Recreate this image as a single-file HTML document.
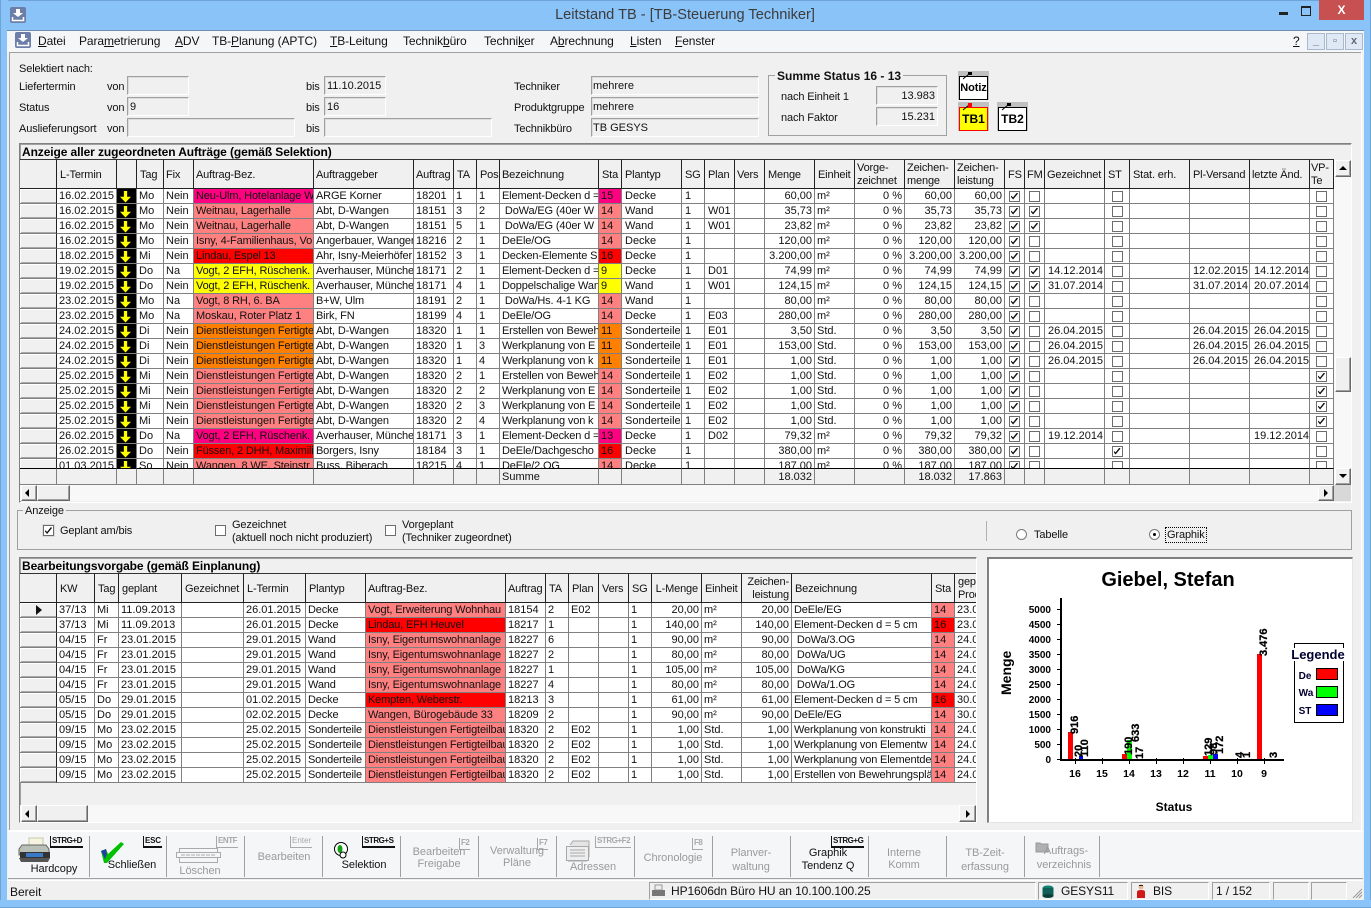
<!DOCTYPE html>
<html lang="de"><head><meta charset="utf-8"><title>Leitstand TB</title>
<style>
html,body{margin:0;padding:0;background:#f0f0f0}
body{position:relative;width:1371px;height:908px;overflow:hidden;font:11px/14px "Liberation Sans",sans-serif;color:#111}
div,span,svg,table,a{box-sizing:border-box}
.b{position:absolute}
.l{position:absolute;white-space:nowrap;line-height:14px;letter-spacing:-.13px}
.g{color:#9a9a9a}
.cc{transform:translateX(-50%);text-align:center;letter-spacing:-.05px}
.f{position:absolute;background:#f0f0f0;border:1px solid;border-color:#a0a0a0 #fff #fff #a0a0a0;box-shadow:inset 1px 1px 0 #dcdcdc;padding:0 2px;line-height:19px;white-space:nowrap;height:19px}
.m1{position:absolute;top:34px;font-size:12px;line-height:14px;white-space:nowrap;color:#111;letter-spacing:-.1px}
table{border-collapse:separate;border-spacing:0;table-layout:fixed;position:absolute;left:0;top:0}
td,th{box-sizing:border-box;border-right:1px solid #808080;border-bottom:1px solid #808080;height:15px;padding:0 2px;line-height:14px;overflow:hidden;white-space:nowrap;font-weight:normal;text-align:left;background:#fff;vertical-align:middle}
th{height:30px;background:#f0f0f0;border-right:1px solid #222;border-bottom:1px solid #222;border-top:1px solid #333;line-height:13px;padding:2px 2px 0;letter-spacing:-.15px}
td.h,.sum td{background:#f0f0f0}
td.h{border-right:1px solid #222;box-shadow:inset 1px 1px 0 #fff,inset 0 -1px 0 #a8a8a8}
.t1 td:nth-child(17),.t1 td:nth-child(19),.t1 td:nth-child(20),.t1 td:nth-child(21),.sum td:nth-child(17),.sum td:nth-child(20),.sum td:nth-child(21),.t2 td:nth-child(14),.t2 td:nth-child(16),.rr{text-align:right}
.t1 td:nth-child(6),.t1 td:nth-child(7),.t1 td:nth-child(11),.t2 td:nth-child(7),.t2 td:nth-child(8),.t2 td:nth-child(17){letter-spacing:-.15px}
.t1 td:nth-child(13),.t1 td:nth-child(14),.t1 td:nth-child(15),.t1 td:nth-child(24),.t1 td:nth-child(27){padding-left:3px}
.t1 td:nth-child(28){padding-left:4px}
.sum td{height:17px;border-bottom:1px solid #808080}
.sum tr td{border-top:1px solid #000}
td.w{background:#000;padding:1px 0 0 3px}
i{display:block}
i.a{width:11px;height:12px;background:#ff0;clip-path:polygon(35% 0,65% 0,65% 52%,100% 52%,50% 100%,0 52%,35% 52%)}
i.c,i.k{width:11px;height:11px;border:1px solid #6d6d6d;background:#fff;margin:0 auto;position:relative;box-sizing:border-box}
i.k::after{content:"";position:absolute;left:1px;top:1px;width:7px;height:7px;background:#111;clip-path:polygon(0 45%,30% 70%,85% 0,100% 15%,30% 100%,0 65%)}
td.m,.m{background:#ff0080}td.r{background:#f00}td.p{background:#ff8080}td.o{background:#ff8000}td.y{background:#ff0}
.bt{position:absolute;background:#f0f0f0;border:1px solid;border-color:#fff #696969 #696969 #fff;box-shadow:inset -1px -1px 0 #a0a0a0}
.tr{position:absolute;background:#f8f8f8}
.arr{position:absolute;width:0;height:0;border:4px solid transparent}
.s{position:absolute;font-weight:bold;font-size:8px;line-height:10px;height:12px;border-left:1px solid currentColor;border-bottom:2px solid currentColor;padding:0 1px 0 1px;white-space:nowrap;letter-spacing:-.45px;color:#111}
.s.g{color:#a8a8a8;border-bottom-width:1px}
.sep{position:absolute;top:836px;height:41px;width:1px;background:#a0a0a0}
.sb{position:absolute;top:882px;height:18px;border:1px solid;border-color:#a0a0a0 #fff #fff #a0a0a0;line-height:17px;padding-left:3px;white-space:nowrap;font-size:12px;letter-spacing:-.1px}
.mb{position:absolute;top:33px;width:18px;height:17px;background:#dfe9f5;border:1px solid #a9b9cc;color:#667;text-align:center;line-height:14px;font-size:11px;font-weight:bold}
.nb{position:absolute;width:31px;height:29px;background:#c0c0c0}
.nb div{position:absolute;left:1px;top:5px;width:29px;height:24px;border:1px solid #000;background:#fff;font-weight:bold;font-size:12px;text-align:center;line-height:22px;color:#000;white-space:nowrap}
.nb svg{position:absolute;left:0;top:0}
</style></head><body>

<!-- Window frame -->
<div class="b" style="left:0;top:0;width:1371px;height:31px;background:#8ac3f8;border-top:1px solid #6fa3d6"></div>
<div class="b" style="left:0;top:0;width:8px;height:908px;background:#8ac3f8;border-left:1px solid #6fa3d6"></div>
<div class="b" style="right:0;top:0;width:8px;height:908px;background:#8ac3f8;border-right:1px solid #6fa3d6"></div>
<div class="b" style="left:0;top:900px;width:1371px;height:8px;background:#8ac3f8;border-bottom:1px solid #6fa3d6"></div>
<div class="b" style="left:7px;top:30px;width:1357px;height:1px;background:#6e8fb2"></div>
<div class="b" style="left:7px;top:31px;width:1357px;height:869px;background:#f0f0f0"></div>

<!-- Title -->
<svg class="b" style="left:10px;top:7px" width="16" height="16" viewBox="0 0 16 16"><rect width="16" height="16" rx="2" fill="#6d7fa8"/><path d="M6 2h4v4h3l-5 4-5-4h3z" fill="#fff"/><path d="M2.500 10v3.500h11V10" fill="none" stroke="#fff" stroke-width="1.500"/></svg>
<div class="l cc" style="left:685px;top:7px;font-size:14.600px;line-height:17px;color:#3c3c3c;letter-spacing:0">Leitstand TB - [TB-Steuerung Techniker]</div>
<div class="b" style="left:1279px;top:12px;width:9px;height:3px;background:#222"></div>
<div class="b" style="left:1301px;top:6px;width:10px;height:10px;border:1px solid #222;border-top-width:2px"></div>
<div class="b" style="left:1319px;top:0;width:45px;height:20px;background:#c75050;color:#fff;text-align:center;font-size:12px;font-weight:bold;line-height:20px">X</div>

<!-- Menu -->
<div class="b" style="left:7px;top:31px;width:1357px;height:21px;background:#f5f6f7"></div>
<svg class="b" style="left:15px;top:32px" width="16" height="16" viewBox="0 0 16 16"><rect width="16" height="16" rx="2" fill="#6d7fa8"/><path d="M6 2h4v4h3l-5 4-5-4h3z" fill="#fff"/><path d="M2.500 10v3.500h11V10" fill="none" stroke="#fff" stroke-width="1.500"/></svg>
<div class="m1" style="left:38px"><u>D</u>atei</div>
<div class="m1" style="left:79px">Para<u>m</u>etrierung</div>
<div class="m1" style="left:175px"><u>A</u>DV</div>
<div class="m1" style="left:212px">TB-<u>P</u>lanung (APTC)</div>
<div class="m1" style="left:330px"><u>T</u>B-Leitung</div>
<div class="m1" style="left:403px">Technik<u>b</u>üro</div>
<div class="m1" style="left:484px">Techni<u>k</u>er</div>
<div class="m1" style="left:550px">A<u>b</u>rechnung</div>
<div class="m1" style="left:630px"><u>L</u>isten</div>
<div class="m1" style="left:675px"><u>F</u>enster</div>
<div class="m1" style="left:1293px"><u>?</u></div>
<div class="mb" style="left:1307px">_</div><div class="mb" style="left:1326px">▫</div><div class="mb" style="left:1345px">x</div>
<div class="b" style="left:9px;top:52px;width:1353px;height:1px;background:#a0a0a0"></div>
<div class="b" style="left:9px;top:52px;width:1px;height:778px;background:#a0a0a0"></div>
<div class="b" style="left:1361px;top:52px;width:1px;height:778px;background:#fff"></div>

<!-- Selection -->
<div class="l" style="left:19px;top:62px">Selektiert nach:</div>
<div class="l" style="left:19px;top:80px">Liefertermin</div><div class="l" style="left:107px;top:80px">von</div>
<div class="f" style="left:127px;top:76px;width:62px"></div><div class="l" style="left:306px;top:80px">bis</div><div class="f" style="left:324px;top:76px;width:62px">11.10.2015</div>
<div class="l" style="left:19px;top:101px">Status</div><div class="l" style="left:107px;top:101px">von</div>
<div class="f" style="left:127px;top:97px;width:62px">9</div><div class="l" style="left:306px;top:101px">bis</div><div class="f" style="left:324px;top:97px;width:62px">16</div>
<div class="l" style="left:19px;top:122px">Auslieferungsort</div><div class="l" style="left:107px;top:122px">von</div>
<div class="f" style="left:127px;top:118px;width:168px"></div><div class="l" style="left:306px;top:122px">bis</div><div class="f" style="left:324px;top:118px;width:168px"></div>
<div class="l" style="left:514px;top:80px">Techniker</div><div class="f" style="left:591px;top:76px;width:168px;padding-left:1px">mehrere</div>
<div class="l" style="left:514px;top:101px">Produktgruppe</div><div class="f" style="left:591px;top:97px;width:168px;padding-left:1px">mehrere</div>
<div class="l" style="left:514px;top:122px">Technikbüro</div><div class="f" style="left:591px;top:118px;width:168px;padding-left:1px">TB GESYS</div>

<div class="b" style="left:768px;top:75px;width:179px;height:61px;border:1px solid #a0a0a0"></div>
<div class="l" style="left:775px;top:69px;background:#f0f0f0;padding:0 2px;font-weight:bold;font-size:12px;letter-spacing:0">Summe Status 16 - 13</div>
<div class="l" style="left:781px;top:90px">nach Einheit 1</div><div class="f rr" style="left:876px;top:86px;width:62px">13.983</div>
<div class="l" style="left:781px;top:111px">nach Faktor</div><div class="f rr" style="left:876px;top:107px;width:62px">15.231</div>

<div class="nb" style="left:958px;top:71px"><div style="font-size:11px;letter-spacing:-.1px">Notiz</div><svg width="20" height="10"><path d="M5 8 11 3" stroke="#000"/><rect x="10" y="1" width="4" height="3" fill="#000"/></svg></div>
<div class="nb" style="left:958px;top:102px"><div style="background:#ff0;border:1px solid #f00">TB1</div><svg width="20" height="10"><path d="M5 8 11 3" stroke="#000"/><rect x="10" y="1" width="4" height="4" fill="#f00"/></svg></div>
<div class="nb" style="left:997px;top:102px"><div>TB2</div><svg width="20" height="10"><path d="M5 8 11 3" stroke="#000"/><rect x="10" y="1" width="4" height="3" fill="#000"/></svg></div>

<!-- Top grid -->
<div class="b" style="left:19px;top:143px;width:1333px;height:360px;border:1px solid;border-color:#808080 #fff #fff #808080;box-shadow:inset 1px 1px 0 #a0a0a0"></div>
<div class="l" style="left:22px;top:145px;font-weight:bold;font-size:12px;line-height:14px;color:#000;letter-spacing:-.1px">Anzeige aller zugeordneten Aufträge (gemäß Selektion)</div>
<div class="b" style="left:20px;top:159px;width:1314px;height:309px;overflow:hidden">
<table class="t1" style="width:1314px">
<colgroup><col style="width:37px"><col style="width:60px"><col style="width:20px"><col style="width:27px"><col style="width:30px"><col style="width:120px"><col style="width:100px"><col style="width:40px"><col style="width:23px"><col style="width:23px"><col style="width:99px"><col style="width:23px"><col style="width:60px"><col style="width:23px"><col style="width:30px"><col style="width:30px"><col style="width:50px"><col style="width:40px"><col style="width:50px"><col style="width:50px"><col style="width:50px"><col style="width:20px"><col style="width:20px"><col style="width:60px"><col style="width:25px"><col style="width:60px"><col style="width:60px"><col style="width:60px"><col style="width:24px"></colgroup>
<tr><th></th><th style="padding-left:3px">L-Termin</th><th></th><th style="padding-left:3px">Tag</th><th>Fix</th><th>Auftrag-Bez.</th><th>Auftraggeber</th><th>Auftrag</th><th style="padding-left:3px">TA</th><th style="padding-left:3px">Pos</th><th>Bezeichnung</th><th style="padding-left:3px">Sta</th><th style="padding-left:3px">Plantyp</th><th style="padding-left:3px">SG</th><th style="padding-left:3px">Plan</th><th>Vers</th><th style="padding-left:3px">Menge</th><th style="padding-left:3px">Einheit</th><th>Vorge-<br>zeichnet</th><th>Zeichen-<br>menge</th><th>Zeichen-<br>leistung</th><th style="padding-left:3px">FS</th><th>FM</th><th>Gezeichnet</th><th style="padding-left:3px">ST</th><th style="padding-left:3px">Stat. erh.</th><th style="padding-left:3px">Pl-Versand</th><th>letzte Änd.</th><th style="padding-left:1px">VP-<br>Te</th></tr>
<tr><td class=h></td><td>16.02.2015</td><td class=w><i class=a></i></td><td>Mo</td><td>Nein</td><td class=m>Neu-Ulm, Hotelanlage W</td><td>ARGE Korner</td><td>18201</td><td>1</td><td>1</td><td>Element-Decken d = 5</td><td class=m>15</td><td>Decke</td><td>1</td><td></td><td></td><td>60,00</td><td>m²</td><td>0 %</td><td>60,00</td><td>60,00</td><td><i class=k></i></td><td><i class=c></i></td><td></td><td><i class=c></i></td><td></td><td></td><td></td><td><i class=c></i></td></tr>
<tr><td class=h></td><td>16.02.2015</td><td class=w><i class=a></i></td><td>Mo</td><td>Nein</td><td class=p>Weitnau, Lagerhalle</td><td>Abt, D-Wangen</td><td>18151</td><td>3</td><td>2</td><td>&nbsp;DoWa/EG (40er W</td><td class=p>14</td><td>Wand</td><td>1</td><td>W01</td><td></td><td>35,73</td><td>m²</td><td>0 %</td><td>35,73</td><td>35,73</td><td><i class=k></i></td><td><i class=k></i></td><td></td><td><i class=c></i></td><td></td><td></td><td></td><td><i class=c></i></td></tr>
<tr><td class=h></td><td>16.02.2015</td><td class=w><i class=a></i></td><td>Mo</td><td>Nein</td><td class=p>Weitnau, Lagerhalle</td><td>Abt, D-Wangen</td><td>18151</td><td>5</td><td>1</td><td>&nbsp;DoWa/EG (40er W</td><td class=p>14</td><td>Wand</td><td>1</td><td>W01</td><td></td><td>23,82</td><td>m²</td><td>0 %</td><td>23,82</td><td>23,82</td><td><i class=k></i></td><td><i class=k></i></td><td></td><td><i class=c></i></td><td></td><td></td><td></td><td><i class=c></i></td></tr>
<tr><td class=h></td><td>16.02.2015</td><td class=w><i class=a></i></td><td>Mo</td><td>Nein</td><td class=p>Isny, 4-Familienhaus, Vo</td><td>Angerbauer, Wangen</td><td>18216</td><td>2</td><td>1</td><td>DeEle/OG</td><td class=p>14</td><td>Decke</td><td>1</td><td></td><td></td><td>120,00</td><td>m²</td><td>0 %</td><td>120,00</td><td>120,00</td><td><i class=k></i></td><td><i class=c></i></td><td></td><td><i class=c></i></td><td></td><td></td><td></td><td><i class=c></i></td></tr>
<tr><td class=h></td><td>18.02.2015</td><td class=w><i class=a></i></td><td>Mi</td><td>Nein</td><td class=r>Lindau, Espel 13</td><td>Ahr, Isny-Meierhöfer</td><td>18152</td><td>3</td><td>1</td><td>Decken-Elemente S</td><td class=r>16</td><td>Decke</td><td>1</td><td></td><td></td><td>3.200,00</td><td>m²</td><td>0 %</td><td>3.200,00</td><td>3.200,00</td><td><i class=k></i></td><td><i class=c></i></td><td></td><td><i class=c></i></td><td></td><td></td><td></td><td><i class=c></i></td></tr>
<tr><td class=h></td><td>19.02.2015</td><td class=w><i class=a></i></td><td>Do</td><td>Na</td><td class=y>Vogt, 2 EFH, Rüschenk.</td><td>Averhauser, München</td><td>18171</td><td>2</td><td>1</td><td>Element-Decken d = 5</td><td class=y>9</td><td>Decke</td><td>1</td><td>D01</td><td></td><td>74,99</td><td>m²</td><td>0 %</td><td>74,99</td><td>74,99</td><td><i class=k></i></td><td><i class=k></i></td><td>14.12.2014</td><td><i class=c></i></td><td></td><td>12.02.2015</td><td>14.12.2014</td><td><i class=c></i></td></tr>
<tr><td class=h></td><td>19.02.2015</td><td class=w><i class=a></i></td><td>Do</td><td>Nein</td><td class=y>Vogt, 2 EFH, Rüschenk.</td><td>Averhauser, München</td><td>18171</td><td>4</td><td>1</td><td>Doppelschalige Wand</td><td class=y>9</td><td>Wand</td><td>1</td><td>W01</td><td></td><td>124,15</td><td>m²</td><td>0 %</td><td>124,15</td><td>124,15</td><td><i class=k></i></td><td><i class=k></i></td><td>31.07.2014</td><td><i class=c></i></td><td></td><td>31.07.2014</td><td>20.07.2014</td><td><i class=c></i></td></tr>
<tr><td class=h></td><td>23.02.2015</td><td class=w><i class=a></i></td><td>Mo</td><td>Na</td><td class=p>Vogt, 8 RH, 6. BA</td><td>B+W, Ulm</td><td>18191</td><td>2</td><td>1</td><td>&nbsp;DoWa/Hs. 4-1 KG</td><td class=p>14</td><td>Wand</td><td>1</td><td></td><td></td><td>80,00</td><td>m²</td><td>0 %</td><td>80,00</td><td>80,00</td><td><i class=k></i></td><td><i class=c></i></td><td></td><td><i class=c></i></td><td></td><td></td><td></td><td><i class=c></i></td></tr>
<tr><td class=h></td><td>23.02.2015</td><td class=w><i class=a></i></td><td>Mo</td><td>Na</td><td class=p>Moskau, Roter Platz 1</td><td>Birk, FN</td><td>18199</td><td>4</td><td>1</td><td>DeEle/OG</td><td class=p>14</td><td>Decke</td><td>1</td><td>E03</td><td></td><td>280,00</td><td>m²</td><td>0 %</td><td>280,00</td><td>280,00</td><td><i class=k></i></td><td><i class=c></i></td><td></td><td><i class=c></i></td><td></td><td></td><td></td><td><i class=c></i></td></tr>
<tr><td class=h></td><td>24.02.2015</td><td class=w><i class=a></i></td><td>Di</td><td>Nein</td><td class=o>Dienstleistungen Fertigte</td><td>Abt, D-Wangen</td><td>18320</td><td>1</td><td>1</td><td>Erstellen von Beweh</td><td class=o>11</td><td>Sonderteile</td><td>1</td><td>E01</td><td></td><td>3,50</td><td>Std.</td><td>0 %</td><td>3,50</td><td>3,50</td><td><i class=k></i></td><td><i class=c></i></td><td>26.04.2015</td><td><i class=c></i></td><td></td><td>26.04.2015</td><td>26.04.2015</td><td><i class=c></i></td></tr>
<tr><td class=h></td><td>24.02.2015</td><td class=w><i class=a></i></td><td>Di</td><td>Nein</td><td class=o>Dienstleistungen Fertigte</td><td>Abt, D-Wangen</td><td>18320</td><td>1</td><td>3</td><td>Werkplanung von E</td><td class=o>11</td><td>Sonderteile</td><td>1</td><td>E01</td><td></td><td>153,00</td><td>Std.</td><td>0 %</td><td>153,00</td><td>153,00</td><td><i class=k></i></td><td><i class=c></i></td><td>26.04.2015</td><td><i class=c></i></td><td></td><td>26.04.2015</td><td>26.04.2015</td><td><i class=c></i></td></tr>
<tr><td class=h></td><td>24.02.2015</td><td class=w><i class=a></i></td><td>Di</td><td>Nein</td><td class=o>Dienstleistungen Fertigte</td><td>Abt, D-Wangen</td><td>18320</td><td>1</td><td>4</td><td>Werkplanung von k</td><td class=o>11</td><td>Sonderteile</td><td>1</td><td>E01</td><td></td><td>1,00</td><td>Std.</td><td>0 %</td><td>1,00</td><td>1,00</td><td><i class=k></i></td><td><i class=c></i></td><td>26.04.2015</td><td><i class=c></i></td><td></td><td>26.04.2015</td><td>26.04.2015</td><td><i class=c></i></td></tr>
<tr><td class=h></td><td>25.02.2015</td><td class=w><i class=a></i></td><td>Mi</td><td>Nein</td><td class=p>Dienstleistungen Fertigte</td><td>Abt, D-Wangen</td><td>18320</td><td>2</td><td>1</td><td>Erstellen von Beweh</td><td class=p>14</td><td>Sonderteile</td><td>1</td><td>E02</td><td></td><td>1,00</td><td>Std.</td><td>0 %</td><td>1,00</td><td>1,00</td><td><i class=k></i></td><td><i class=c></i></td><td></td><td><i class=c></i></td><td></td><td></td><td></td><td><i class=k></i></td></tr>
<tr><td class=h></td><td>25.02.2015</td><td class=w><i class=a></i></td><td>Mi</td><td>Nein</td><td class=p>Dienstleistungen Fertigte</td><td>Abt, D-Wangen</td><td>18320</td><td>2</td><td>2</td><td>Werkplanung von E</td><td class=p>14</td><td>Sonderteile</td><td>1</td><td>E02</td><td></td><td>1,00</td><td>Std.</td><td>0 %</td><td>1,00</td><td>1,00</td><td><i class=k></i></td><td><i class=c></i></td><td></td><td><i class=c></i></td><td></td><td></td><td></td><td><i class=k></i></td></tr>
<tr><td class=h></td><td>25.02.2015</td><td class=w><i class=a></i></td><td>Mi</td><td>Nein</td><td class=p>Dienstleistungen Fertigte</td><td>Abt, D-Wangen</td><td>18320</td><td>2</td><td>3</td><td>Werkplanung von E</td><td class=p>14</td><td>Sonderteile</td><td>1</td><td>E02</td><td></td><td>1,00</td><td>Std.</td><td>0 %</td><td>1,00</td><td>1,00</td><td><i class=k></i></td><td><i class=c></i></td><td></td><td><i class=c></i></td><td></td><td></td><td></td><td><i class=k></i></td></tr>
<tr><td class=h></td><td>25.02.2015</td><td class=w><i class=a></i></td><td>Mi</td><td>Nein</td><td class=p>Dienstleistungen Fertigte</td><td>Abt, D-Wangen</td><td>18320</td><td>2</td><td>4</td><td>Werkplanung von k</td><td class=p>14</td><td>Sonderteile</td><td>1</td><td>E02</td><td></td><td>1,00</td><td>Std.</td><td>0 %</td><td>1,00</td><td>1,00</td><td><i class=k></i></td><td><i class=c></i></td><td></td><td><i class=c></i></td><td></td><td></td><td></td><td><i class=k></i></td></tr>
<tr><td class=h></td><td>26.02.2015</td><td class=w><i class=a></i></td><td>Do</td><td>Na</td><td class=m>Vogt, 2 EFH, Rüschenk.</td><td>Averhauser, München</td><td>18171</td><td>3</td><td>1</td><td>Element-Decken d = 5</td><td class=m>13</td><td>Decke</td><td>1</td><td>D02</td><td></td><td>79,32</td><td>m²</td><td>0 %</td><td>79,32</td><td>79,32</td><td><i class=k></i></td><td><i class=c></i></td><td>19.12.2014</td><td><i class=c></i></td><td></td><td></td><td>19.12.2014</td><td><i class=c></i></td></tr>
<tr><td class=h></td><td>26.02.2015</td><td class=w><i class=a></i></td><td>Do</td><td>Nein</td><td class=r>Füssen, 2 DHH, Maximili</td><td>Borgers, Isny</td><td>18184</td><td>3</td><td>1</td><td>DeEle/Dachgescho</td><td class=r>16</td><td>Decke</td><td>1</td><td></td><td></td><td>380,00</td><td>m²</td><td>0 %</td><td>380,00</td><td>380,00</td><td><i class=k></i></td><td><i class=c></i></td><td></td><td><i class=k></i></td><td></td><td></td><td></td><td><i class=c></i></td></tr>
<tr><td class=h></td><td>01.03.2015</td><td class=w><i class=a></i></td><td>So</td><td>Nein</td><td class=p>Wangen, 8 WE, Steinstr</td><td>Buss, Biberach</td><td>18215</td><td>4</td><td>1</td><td>DeEle/2.OG</td><td class=p>14</td><td>Decke</td><td>1</td><td></td><td></td><td>187,00</td><td>m²</td><td>0 %</td><td>187,00</td><td>187,00</td><td><i class=k></i></td><td><i class=c></i></td><td></td><td><i class=c></i></td><td></td><td></td><td></td><td><i class=c></i></td></tr>
</table></div>
<div class="b" style="left:20px;top:468px;width:1314px;height:17px;overflow:hidden">
<table class="sum" style="width:1314px">
<colgroup><col style="width:37px"><col style="width:60px"><col style="width:20px"><col style="width:27px"><col style="width:30px"><col style="width:120px"><col style="width:100px"><col style="width:40px"><col style="width:23px"><col style="width:23px"><col style="width:99px"><col style="width:23px"><col style="width:60px"><col style="width:23px"><col style="width:30px"><col style="width:30px"><col style="width:50px"><col style="width:40px"><col style="width:50px"><col style="width:50px"><col style="width:50px"><col style="width:20px"><col style="width:20px"><col style="width:60px"><col style="width:25px"><col style="width:60px"><col style="width:60px"><col style="width:60px"><col style="width:24px"></colgroup>
<tr><td></td><td></td><td></td><td></td><td></td><td></td><td></td><td></td><td></td><td></td><td>Summe</td><td></td><td></td><td></td><td></td><td></td><td>18.032</td><td></td><td></td><td>18.032</td><td>17.863</td><td></td><td></td><td></td><td></td><td></td><td></td><td></td><td></td></tr>
</table></div>
<!-- top scrollbars -->
<div class="tr" style="left:1334px;top:160px;width:17px;height:325px"></div>
<div class="bt" style="left:1335px;top:160px;width:16px;height:17px"><span class="arr" style="left:3px;top:5px;border-bottom-color:#000;border-top:0"></span></div>
<div class="bt" style="left:1335px;top:357px;width:16px;height:35px"></div>
<div class="bt" style="left:1335px;top:468px;width:16px;height:17px"><span class="arr" style="left:3px;top:5px;border-top-color:#000;border-bottom:0"></span></div>
<div class="tr" style="left:20px;top:485px;width:1314px;height:16px"></div>
<div class="b" style="left:1334px;top:485px;width:17px;height:16px;background:#d8d8d8"></div>
<div class="bt" style="left:21px;top:485px;width:16px;height:16px"><span class="arr" style="left:3px;top:3px;border-right-color:#000;border-left:0"></span></div>
<div class="bt" style="left:37px;top:485px;width:33px;height:16px"></div>
<div class="bt" style="left:1318px;top:485px;width:16px;height:16px"><span class="arr" style="left:5px;top:3px;border-left-color:#000;border-right:0"></span></div>

<!-- Anzeige -->
<div class="b" style="left:17px;top:510px;width:1335px;height:40px;border:1px solid #a0a0a0;border-right-color:#a0a0a0"></div>
<div class="l" style="left:23px;top:504px;background:#f0f0f0;padding:0 2px">Anzeige</div>
<i class="k" style="position:absolute;left:43px;top:525px;width:11px;height:11px;box-shadow:0 0 0 1px #dcdcdc"></i><div class="l" style="left:60px;top:524px">Geplant am/bis</div>
<i class="c" style="position:absolute;left:215px;top:525px"></i><div class="l" style="left:232px;top:518px">Gezeichnet</div><div class="l" style="left:232px;top:531px">(aktuell noch nicht produziert)</div>
<i class="c" style="position:absolute;left:385px;top:525px"></i><div class="l" style="left:402px;top:518px">Vorgeplant</div><div class="l" style="left:402px;top:531px">(Techniker zugeordnet)</div>
<div class="b" style="left:986px;top:521px;width:1px;height:20px;background:#b0b0b0"></div>
<div class="b" style="left:1016px;top:529px;width:11px;height:11px;border-radius:50%;border:1px solid #7a7a7a;background:#fff"></div><div class="l" style="left:1034px;top:528px">Tabelle</div>
<div class="b" style="left:1149px;top:529px;width:11px;height:11px;border-radius:50%;border:1px solid #7a7a7a;background:#fff"></div><div class="b" style="left:1153px;top:533px;width:3px;height:3px;background:#000;border-radius:50%"></div>
<div class="l" style="left:1165px;top:527px;border:1px dotted #000;padding:0 1px;line-height:14px">Graphik</div>

<!-- Bottom grid -->
<div class="b" style="left:19px;top:557px;width:958px;height:266px;border:1px solid;border-color:#808080 #fff #fff #808080;box-shadow:inset 1px 1px 0 #a0a0a0"></div>
<div class="l" style="left:22px;top:559px;font-weight:bold;font-size:12px;color:#000;letter-spacing:-.1px">Bearbeitungsvorgabe (gemäß Einplanung)</div>
<div class="b" style="left:20px;top:573px;width:956px;height:220px;overflow:hidden">
<table class="t2" style="width:957px">
<colgroup><col style="width:37px"><col style="width:38px"><col style="width:24px"><col style="width:63px"><col style="width:62px"><col style="width:62px"><col style="width:60px"><col style="width:140px"><col style="width:40px"><col style="width:23px"><col style="width:30px"><col style="width:30px"><col style="width:23px"><col style="width:50px"><col style="width:40px"><col style="width:50px"><col style="width:140px"><col style="width:23px"><col style="width:22px"></colgroup>
<tr><th></th><th style="padding-left:3px">KW</th><th style="padding-left:3px">Tag</th><th style="padding-left:3px">geplant</th><th style="padding-left:3px">Gezeichnet</th><th style="padding-left:3px">L-Termin</th><th style="padding-left:3px">Plantyp</th><th>Auftrag-Bez.</th><th>Auftrag</th><th style="padding-left:3px">TA</th><th style="padding-left:3px">Plan</th><th style="padding-left:3px">Vers</th><th style="padding-left:3px">SG</th><th class="rr" style="padding-right:3px">L-Menge</th><th style="padding-left:3px">Einheit</th><th class="rr" style="padding-right:2px">Zeichen-<br>leistung</th><th style="padding-left:3px">Bezeichnung</th><th style="padding-left:3px">Sta</th><th style="padding-left:3px">gepl.<br>Prod.</th></tr>
<tr><td class=h style="position:relative"><span class="arr" style="left:16px;top:2px;border-width:5px 6px;border-left-color:#111;border-right:0"></span></td><td>37/13</td><td>Mi</td><td>11.09.2013</td><td></td><td>26.01.2015</td><td>Decke</td><td class=p>Vogt, Erweiterung Wohnhau</td><td>18154</td><td>2</td><td>E02</td><td></td><td>1</td><td>20,00</td><td>m²</td><td>20,00</td><td>DeEle/EG</td><td class=p>14</td><td>23.0</td></tr>
<tr><td class=h></td><td>37/13</td><td>Mi</td><td>11.09.2013</td><td></td><td>26.01.2015</td><td>Decke</td><td class=r>Lindau, EFH Heuvel</td><td>18217</td><td>1</td><td></td><td></td><td>1</td><td>140,00</td><td>m²</td><td>140,00</td><td>Element-Decken d = 5 cm</td><td class=r>16</td><td>23.0</td></tr>
<tr><td class=h></td><td>04/15</td><td>Fr</td><td>23.01.2015</td><td></td><td>29.01.2015</td><td>Wand</td><td class=p>Isny, Eigentumswohnanlage</td><td>18227</td><td>6</td><td></td><td></td><td>1</td><td>90,00</td><td>m²</td><td>90,00</td><td>&nbsp;DoWa/3.OG</td><td class=p>14</td><td>24.0</td></tr>
<tr><td class=h></td><td>04/15</td><td>Fr</td><td>23.01.2015</td><td></td><td>29.01.2015</td><td>Wand</td><td class=p>Isny, Eigentumswohnanlage</td><td>18227</td><td>2</td><td></td><td></td><td>1</td><td>80,00</td><td>m²</td><td>80,00</td><td>&nbsp;DoWa/UG</td><td class=p>14</td><td>24.0</td></tr>
<tr><td class=h></td><td>04/15</td><td>Fr</td><td>23.01.2015</td><td></td><td>29.01.2015</td><td>Wand</td><td class=p>Isny, Eigentumswohnanlage</td><td>18227</td><td>1</td><td></td><td></td><td>1</td><td>105,00</td><td>m²</td><td>105,00</td><td>&nbsp;DoWa/KG</td><td class=p>14</td><td>24.0</td></tr>
<tr><td class=h></td><td>04/15</td><td>Fr</td><td>23.01.2015</td><td></td><td>29.01.2015</td><td>Wand</td><td class=p>Isny, Eigentumswohnanlage</td><td>18227</td><td>4</td><td></td><td></td><td>1</td><td>80,00</td><td>m²</td><td>80,00</td><td>&nbsp;DoWa/1.OG</td><td class=p>14</td><td>24.0</td></tr>
<tr><td class=h></td><td>05/15</td><td>Do</td><td>29.01.2015</td><td></td><td>01.02.2015</td><td>Decke</td><td class=r>Kempten, Weberstr.</td><td>18213</td><td>3</td><td></td><td></td><td>1</td><td>61,00</td><td>m²</td><td>61,00</td><td>Element-Decken d = 5 cm</td><td class=r>16</td><td>30.0</td></tr>
<tr><td class=h></td><td>05/15</td><td>Do</td><td>29.01.2015</td><td></td><td>02.02.2015</td><td>Decke</td><td class=p>Wangen, Bürogebäude 33</td><td>18209</td><td>2</td><td></td><td></td><td>1</td><td>90,00</td><td>m²</td><td>90,00</td><td>DeEle/EG</td><td class=p>14</td><td>30.0</td></tr>
<tr><td class=h></td><td>09/15</td><td>Mo</td><td>23.02.2015</td><td></td><td>25.02.2015</td><td>Sonderteile</td><td class=p>Dienstleistungen Fertigteilbau</td><td>18320</td><td>2</td><td>E02</td><td></td><td>1</td><td>1,00</td><td>Std.</td><td>1,00</td><td>Werkplanung von konstrukti</td><td class=p>14</td><td>24.0</td></tr>
<tr><td class=h></td><td>09/15</td><td>Mo</td><td>23.02.2015</td><td></td><td>25.02.2015</td><td>Sonderteile</td><td class=p>Dienstleistungen Fertigteilbau</td><td>18320</td><td>2</td><td>E02</td><td></td><td>1</td><td>1,00</td><td>Std.</td><td>1,00</td><td>Werkplanung von Elementw</td><td class=p>14</td><td>24.0</td></tr>
<tr><td class=h></td><td>09/15</td><td>Mo</td><td>23.02.2015</td><td></td><td>25.02.2015</td><td>Sonderteile</td><td class=p>Dienstleistungen Fertigteilbau</td><td>18320</td><td>2</td><td>E02</td><td></td><td>1</td><td>1,00</td><td>Std.</td><td>1,00</td><td>Werkplanung von Elementde</td><td class=p>14</td><td>24.0</td></tr>
<tr><td class=h></td><td>09/15</td><td>Mo</td><td>23.02.2015</td><td></td><td>25.02.2015</td><td>Sonderteile</td><td class=p>Dienstleistungen Fertigteilbau</td><td>18320</td><td>2</td><td>E02</td><td></td><td>1</td><td>1,00</td><td>Std.</td><td>1,00</td><td>Erstellen von Bewehrungsplä</td><td class=p>14</td><td>24.0</td></tr>
</table></div>
<div class="tr" style="left:20px;top:805px;width:956px;height:17px"></div>
<div class="bt" style="left:21px;top:805px;width:16px;height:17px"><span class="arr" style="left:3px;top:4px;border-right-color:#000;border-left:0"></span></div>
<div class="bt" style="left:37px;top:805px;width:51px;height:17px"></div>
<div class="bt" style="left:959px;top:805px;width:17px;height:17px"><span class="arr" style="left:6px;top:4px;border-left-color:#000;border-right:0"></span></div>

<!-- Chart -->
<div class="b" style="left:987px;top:557px;width:366px;height:266px;background:#fff;border:3px solid;border-color:#808080 #e4e4e4 #e4e4e4 #808080;border-width:2px 1px 1px 2px"></div>
<svg class="b" style="left:0;top:0" width="1371" height="908" font-family="'Liberation Sans',sans-serif" font-weight="bold" fill="#000">
<text x="1168" y="586" font-size="20" text-anchor="middle">Giebel, Stefan</text>
<g font-size="10" text-anchor="end"><text x="1051" y="613">5000</text><text x="1051" y="628">4500</text><text x="1051" y="643">4000</text><text x="1051" y="658">3500</text><text x="1051" y="673">3000</text><text x="1051" y="688">2500</text><text x="1051" y="703">2000</text><text x="1051" y="718">1500</text><text x="1051" y="733">1000</text><text x="1051" y="748">500</text><text x="1051" y="763">0</text></g>
<g fill="#000"><rect x="1057" y="609" width="3" height="1"/><rect x="1057" y="624" width="3" height="1"/><rect x="1057" y="639" width="3" height="1"/><rect x="1057" y="654" width="3" height="1"/><rect x="1057" y="669" width="3" height="1"/><rect x="1057" y="684" width="3" height="1"/><rect x="1057" y="699" width="3" height="1"/><rect x="1057" y="714" width="3" height="1"/><rect x="1057" y="729" width="3" height="1"/><rect x="1057" y="744" width="3" height="1"/><rect x="1057" y="759" width="3" height="1"/>
<rect x="1075" y="758" width="1" height="6"/><rect x="1102" y="758" width="1" height="6"/><rect x="1129" y="758" width="1" height="6"/><rect x="1156" y="758" width="1" height="6"/><rect x="1183" y="758" width="1" height="6"/><rect x="1210" y="758" width="1" height="6"/><rect x="1237" y="758" width="1" height="6"/><rect x="1264" y="758" width="1" height="6"/></g>
<rect x="1068" y="732" width="5" height="27" fill="#f00"/><rect x="1079" y="756" width="4" height="3" fill="#00f"/><rect x="1122" y="754" width="5" height="5" fill="#f00"/><rect x="1127" y="740" width="5" height="19" fill="#0f0"/><rect x="1203" y="756" width="5" height="3" fill="#f00"/><rect x="1208" y="755" width="5" height="4" fill="#0f0"/><rect x="1213" y="754" width="5" height="5" fill="#00f"/><rect x="1257" y="654" width="5" height="105" fill="#f00"/>
<rect x="1060" y="598" width="2" height="162"/><rect x="1060" y="759" width="224" height="2"/>
<g font-size="10.500" text-anchor="middle"><text x="1075" y="777">16</text><text x="1102" y="777">15</text><text x="1129" y="777">14</text><text x="1156" y="777">13</text><text x="1183" y="777">12</text><text x="1210" y="777">11</text><text x="1237" y="777">10</text><text x="1264" y="777">9</text></g>
<g font-size="11" stroke="#000" stroke-width=".25"><text transform="translate(1078,734) rotate(-90)">916</text><text transform="translate(1082,757) rotate(-90)">20</text><text transform="translate(1088,757) rotate(-90)">110</text><text transform="translate(1132,755) rotate(-90)">190</text><text transform="translate(1139,742) rotate(-90)">633</text><text transform="translate(1143,759) rotate(-90)">17</text><text transform="translate(1212,756) rotate(-90)">129</text><text transform="translate(1217,755) rotate(-90)">98</text><text transform="translate(1223,754) rotate(-90)">172</text><text transform="translate(1243,758) rotate(-90)">4</text><text transform="translate(1250,758) rotate(-90)">1</text><text transform="translate(1267,656) rotate(-90)">3.476</text><text transform="translate(1277,758) rotate(-90)">3</text></g>
<text transform="translate(1011,695) rotate(-90)" font-size="14">Menge</text>
<text x="1174" y="811" font-size="12" text-anchor="middle">Status</text>
<rect x="1294.500" y="643.500" width="49" height="79" fill="#fff" stroke="#000"/><rect x="1290" y="648" width="58" height="13" fill="#fff"/>
<text x="1318" y="659" font-size="13" text-anchor="middle" fill="#000030">Legende</text>
<g font-size="10" text-anchor="middle" fill="#000030"><text x="1305" y="679">De</text><text x="1306" y="696">Wa</text><text x="1305" y="714">ST</text></g>
<rect x="1316.500" y="668.500" width="21" height="11" fill="#f00" stroke="#000"/><rect x="1316.500" y="686.500" width="21" height="11" fill="#0f0" stroke="#000"/><rect x="1316.500" y="704.500" width="21" height="11" fill="#00f" stroke="#000"/>
</svg>

<!-- Toolbar -->
<div class="b" style="left:8px;top:830px;width:1355px;height:2px;background:#fff"></div>
<div class="b" style="left:8px;top:832px;width:1355px;height:47px;background:#f5f6f7;border-bottom:1px solid #a0a0a0"></div>
<div class="sep" style="left:89px"></div><div class="sep" style="left:166px"></div><div class="sep" style="left:244px"></div><div class="sep" style="left:322px"></div><div class="sep" style="left:400px"></div><div class="sep" style="left:478px"></div><div class="sep" style="left:556px"></div><div class="sep" style="left:634px"></div><div class="sep" style="left:712px"></div><div class="sep" style="left:790px"></div><div class="sep" style="left:868px"></div><div class="sep" style="left:946px"></div><div class="sep" style="left:1024px"></div><div class="sep" style="left:1099px"></div>
<svg class="b" style="left:17px;top:837px" width="36" height="26" viewBox="0 0 36 26"><rect x="12" y="1" width="14" height="10" fill="#f4f4e0" stroke="#c8c8a8"/><path d="M5 8h24l3 4v6H2v-6z" fill="#b8c0b8" stroke="#666"/><rect x="3" y="15" width="30" height="6" fill="#333"/><rect x="9" y="16" width="17" height="4" fill="#3a78c8"/><path d="M2 21h31l-2 4H4z" fill="#555"/></svg>
<svg class="b" style="left:99px;top:841px" width="26" height="24" viewBox="0 0 26 24"><path d="M2 10 7 8 9 13 22 1l3 2L8 22 5 22z" fill="#00c000"/><path d="M2 10 7 8 8 13 6 18z" fill="#2040a0"/></svg>
<svg class="b" style="left:176px;top:848px" width="46" height="15" viewBox="0 0 46 15"><rect x="3.500" y="0.500" width="38" height="4" fill="none" stroke="#aaa"/><rect x="0.500" y="4.500" width="44" height="5" fill="none" stroke="#aaa"/><rect x="3.500" y="9.500" width="38" height="5" fill="none" stroke="#aaa"/><path d="M5 7h34" stroke="#aaa" stroke-dasharray="4 1"/></svg>
<svg class="b" style="left:333px;top:842px" width="18" height="18" viewBox="0 0 18 18"><circle cx="8" cy="7" r="6.500" fill="#fff" stroke="#000"/><ellipse cx="7" cy="7" rx="2.500" ry="4" fill="#10a010"/><circle cx="10" cy="13" r="3" fill="#fff" stroke="#000"/></svg>
<svg class="b" style="left:565px;top:840px" width="30" height="24" viewBox="0 0 30 24" fill="none" stroke="#a8a8a8"><path d="M5 5 8 1h16v16" fill="#e4e4e4"/><rect x="1.500" y="6.500" width="22" height="14" fill="#eee"/><path d="M5 10h15M5 13h15M5 16h15M3 21h19"/></svg>
<svg class="b" style="left:1035px;top:841px" width="14" height="12" viewBox="0 0 14 12"><path d="M1 2h4l1 1h7v8H1z" fill="#b0b0b0" stroke="#999"/></svg>
<div class="s" style="left:50px;top:836px">STRG+D</div>
<div class="s" style="left:143px;top:836px;letter-spacing:-.2px">ESC</div>
<div class="s g" style="left:216px;top:836px">ENTF</div>
<div class="s g" style="left:290px;top:836px;font-weight:normal;letter-spacing:0">Enter</div>
<div class="s" style="left:362px;top:836px">STRG+S</div>
<div class="s g" style="left:459px;top:838px">F2</div>
<div class="s g" style="left:537px;top:838px">F7</div>
<div class="s g" style="left:595px;top:836px">STRG+F2</div>
<div class="s g" style="left:692px;top:838px">F8</div>
<div class="s" style="left:831px;top:836px">STRG+G</div>
<div class="l cc" style="left:54px;top:862px">Hardcopy</div>
<div class="l cc" style="left:132px;top:858px">Schließen</div>
<div class="l cc g" style="left:200px;top:864px">Löschen</div>
<div class="l cc g" style="left:284px;top:850px">Bearbeiten</div>
<div class="l cc" style="left:364px;top:858px">Selektion</div>
<div class="l cc g" style="left:439px;top:845px">Bearbeiten</div><div class="l cc g" style="left:439px;top:857px">Freigabe</div>
<div class="l cc g" style="left:517px;top:844px">Verwaltung</div><div class="l cc g" style="left:517px;top:856px">Pläne</div>
<div class="l cc g" style="left:593px;top:860px">Adressen</div>
<div class="l cc g" style="left:673px;top:851px">Chronologie</div>
<div class="l cc g" style="left:751px;top:846px">Planver-</div><div class="l cc g" style="left:751px;top:860px">waltung</div>
<div class="l cc" style="left:828px;top:846px">Graphik</div><div class="l cc" style="left:828px;top:859px">Tendenz Q</div>
<div class="l cc g" style="left:904px;top:846px">Interne</div><div class="l cc g" style="left:904px;top:858px">Komm</div>
<div class="l cc g" style="left:985px;top:846px">TB-Zeit-</div><div class="l cc g" style="left:985px;top:860px">erfassung</div>
<div class="l cc g" style="left:1066px;top:844px">Auftrags-</div><div class="l cc g" style="left:1064px;top:858px">verzeichnis</div>

<!-- Status bar -->
<div class="b" style="left:8px;top:880px;width:1355px;height:20px;background:#f0f0f0;border-top:1px solid #fff"></div>
<div class="l" style="left:10px;top:885px;font-size:12px;letter-spacing:0">Bereit</div>
<div class="sb" style="left:649px;width:387px;padding-left:21px">HP1606dn Büro HU an 10.100.100.25</div>
<svg class="b" style="left:651px;top:884px" width="15" height="14" viewBox="0 0 15 14"><rect x="4" y="1" width="7" height="5" fill="#eee" stroke="#999"/><rect x="1" y="6" width="13" height="6" fill="#777"/></svg>
<div class="sb" style="left:1038px;width:90px;padding-left:22px">GESYS11</div>
<svg class="b" style="left:1042px;top:885px" width="12" height="13" viewBox="0 0 12 13"><ellipse cx="6" cy="3" rx="5.500" ry="2.500" fill="#108070"/><rect x="0.500" y="3" width="11" height="8" fill="#106058"/><ellipse cx="6" cy="11" rx="5.500" ry="2" fill="#0a4038"/></svg>
<div class="sb" style="left:1131px;width:78px;padding-left:21px">BIS</div>
<svg class="b" style="left:1135px;top:884px" width="12" height="15" viewBox="0 0 12 15"><circle cx="6" cy="3" r="2.500" fill="#e8b890"/><path d="M4 1h4v1H4z" fill="#222"/><path d="M2 14V8q0-2 4-2t4 2v6z" fill="#d01818"/></svg>
<div class="sb" style="left:1212px;width:58px">1 / 152</div>
<div class="sb" style="left:1273px;width:36px"></div>
<div class="sb" style="left:1311px;width:36px"></div>
<svg class="b" style="left:1352px;top:888px" width="11" height="11" viewBox="0 0 11 11" stroke="#999"><path d="M10 1 1 10M10 4 4 10M10 7 7 10"/></svg>
</body></html>
